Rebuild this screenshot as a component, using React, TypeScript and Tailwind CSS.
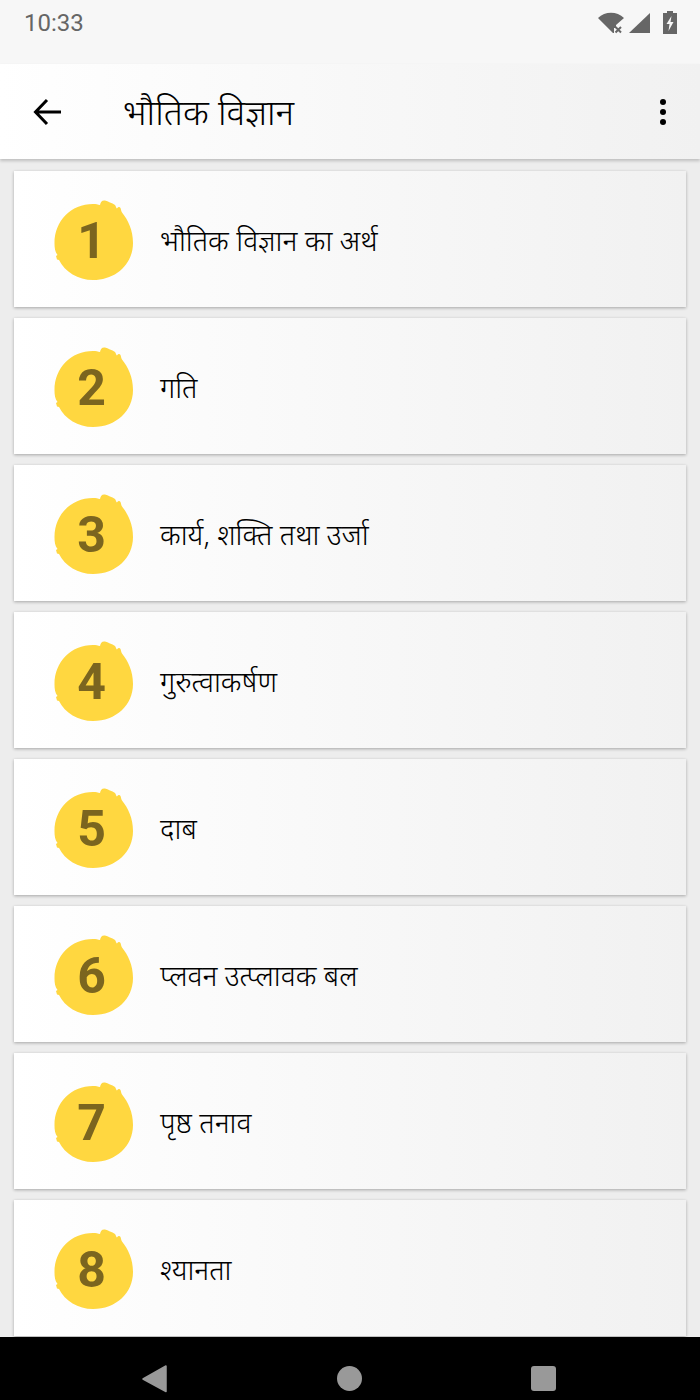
const topics = [
  "भौतिक विज्ञान का अर्थ",
  "गति",
  "कार्य, शक्ति तथा उर्जा",
  "गुरुत्वाकर्षण",
  "दाब",
  "प्लवन उत्प्लावक बल",
  "पृष्ठ तनाव",
  "श्यानता",
];

function Blob({ n }: { n: number }) {
  return (
    <div className="relative w-[80px] h-[80px] shrink-0 flex items-center justify-center mt-[2px] -ml-[1px]">
      <svg viewBox="0 0 80 80" className="absolute inset-0 w-full h-full">
        <path
          d="M0.500 43C0.500 21 17 4 39 4C42 4 44 4.500 46 5C46.500 2 48 0 51 0.500C54 1.500 58 3 61 5C62 6 62 8 63 8.500C64 7 65.500 6.500 66.500 8C67 9 67 11 68 12.500C74 20 79 30 79 43C79 64 62 80 39 80C24 80 11 72 5 60L3 59.500L2 56L3.500 55C1 52 0.500 48 0.500 43Z"
          fill="#ffd740"
        />
      </svg>
      <span className="relative -ml-[5px] mt-[2px] font-['Roboto',sans-serif] font-bold text-[50px] leading-none text-[#7b651f]">{n}</span>
    </div>
  );
}

function Row({ n, title }: { n: number; title: string }) {
  return (
    <div className="h-[136px] shrink-0 flex items-center pl-[41px] bg-gradient-to-r from-white to-[#f1f1f1] shadow-[0_1px_3px_rgba(0,0,0,0.3)]">
      <Blob n={n} />
      <p className="ml-[26px] mt-[2px] text-[28.500px] font-light text-black">{title}</p>
    </div>
  );
}

export default function App() {
  return (
    <div className="relative w-[700px] h-[1400px] overflow-hidden flex flex-col bg-[#ededed] font-['Noto_Sans','Noto_Sans_Devanagari','Lohit_Devanagari',sans-serif]">
      <div className="h-[64px] shrink-0 bg-[#f7f7f7] flex items-start justify-between pl-[24px] pr-[23px] pt-[9px]">
        <span className="font-['Roboto',sans-serif] text-[24px] leading-[28px] text-[#666666]">10:33</span>
        <div className="flex items-center pt-[2px]">
          <svg width="27" height="22" viewBox="0 0 27 22">
            <path d="M0 6C7 -1 19 -1 26 6L18 13V16H16V21H15Z" fill="#666666" />
            <path d="M17.500 15L23 20.500M23 15L17.500 20.500" stroke="#666666" strokeWidth="2" />
          </svg>
          <svg width="22" height="22" viewBox="0 0 22 22" className="ml-[4px]"><path d="M21 1V21H0Z" fill="#666666" /></svg>
          <svg width="14" height="23" viewBox="0 0 14 23" className="ml-[12px]">
            <path d="M4 0H10V2H14V23H0V2H4Z" fill="#666666" />
            <path d="M8.500 5L3.500 13H6.500L5.500 20L10.500 11H7.500Z" fill="#f7f7f7" />
          </svg>
        </div>
      </div>

      <div className="h-[95px] shrink-0 flex items-center bg-gradient-to-r from-white to-[#f1f1f1] shadow-[0_2px_3px_rgba(0,0,0,0.2)] z-10">
        <svg width="30" height="28" viewBox="0 0 30 28" className="ml-[33px] shrink-0">
          <path d="M28 14H3M14 2L2.500 14L14 26" fill="none" stroke="#000000" strokeWidth="3" />
        </svg>
        <h1 className="ml-[60px] text-[35.500px] font-light text-black">भौतिक विज्ञान</h1>
        <div className="ml-auto mr-[34px] flex flex-col gap-[4px]">
          <span className="w-[6px] h-[6px] rounded-full bg-black" />
          <span className="w-[6px] h-[6px] rounded-full bg-black" />
          <span className="w-[6px] h-[6px] rounded-full bg-black" />
        </div>
      </div>

      <div className="flex-1 min-h-0 overflow-hidden flex flex-col gap-[11px] px-[14px] pt-[12px]">
        {topics.map((t, i) => (
          <Row key={t} n={i + 1} title={t} />
        ))}
      </div>

      <div className="absolute left-0 right-0 bottom-0 h-[63px] bg-black flex items-center">
        <svg width="26" height="28" viewBox="0 0 26 28" className="absolute left-[142px] top-[28px]">
          <path d="M24 1V26.500L1 14Z" fill="#999999" stroke="#999999" strokeWidth="1.500" strokeLinejoin="round" />
        </svg>
        <span className="absolute left-[337px] top-[29px] w-[25px] h-[25px] rounded-full bg-[#999999]" />
        <span className="absolute left-[531px] top-[29px] w-[25px] h-[25px] rounded-[3px] bg-[#999999]" />
      </div>
    </div>
  );
}
